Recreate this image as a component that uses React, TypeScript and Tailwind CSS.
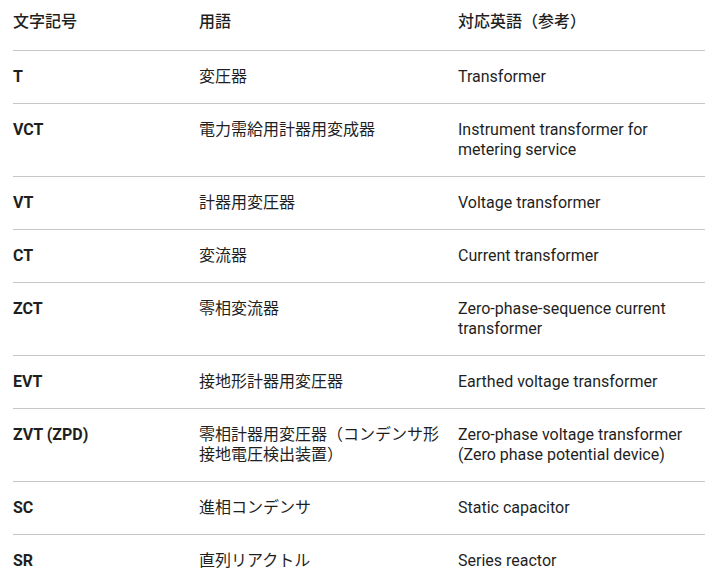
import React from "react";

const rows: [string, string, string][] = [
  ["T", "変圧器", "Transformer"],
  ["VCT", "電力需給用計器用変成器", "Instrument transformer for metering service"],
  ["VT", "計器用変圧器", "Voltage transformer"],
  ["CT", "変流器", "Current transformer"],
  ["ZCT", "零相変流器", "Zero-phase-sequence current transformer"],
  ["EVT", "接地形計器用変圧器", "Earthed voltage transformer"],
  ["ZVT (ZPD)", "零相計器用変圧器（コンデンサ形接地電圧検出装置）", "Zero-phase voltage transformer (Zero phase potential device)"],
  ["SC", "進相コンデンサ", "Static capacitor"],
  ["SR", "直列リアクトル", "Series reactor"],
];

export default function App() {
  return (
    <div
      className="w-[707px] h-[583px] overflow-hidden bg-white text-[#1f1f1f] text-[16px] leading-[20px]"
      style={{ fontFamily: 'Roboto, "Noto Sans CJK JP", sans-serif' }}
    >
      <div className="ml-[13px] w-[692px]">
        <div className="grid grid-cols-[186px_259px_1fr] border-b border-[#c7c7c7] pt-3 pb-[18px] font-medium">
          <div>文字記号</div>
          <div className="pr-4">用語</div>
          <div>対応英語（参考）</div>
        </div>
        {rows.map((r, i) => (
          <div
            key={r[0]}
            className={
              "grid grid-cols-[186px_259px_1fr] py-4 " +
              (i < rows.length - 1 ? "border-b border-[#c7c7c7]" : "")
            }
          >
            <div className="font-bold">{r[0]}</div>
            <div className="pr-4">{r[1]}</div>
            <div>{r[2]}</div>
          </div>
        ))}
      </div>
    </div>
  );
}
